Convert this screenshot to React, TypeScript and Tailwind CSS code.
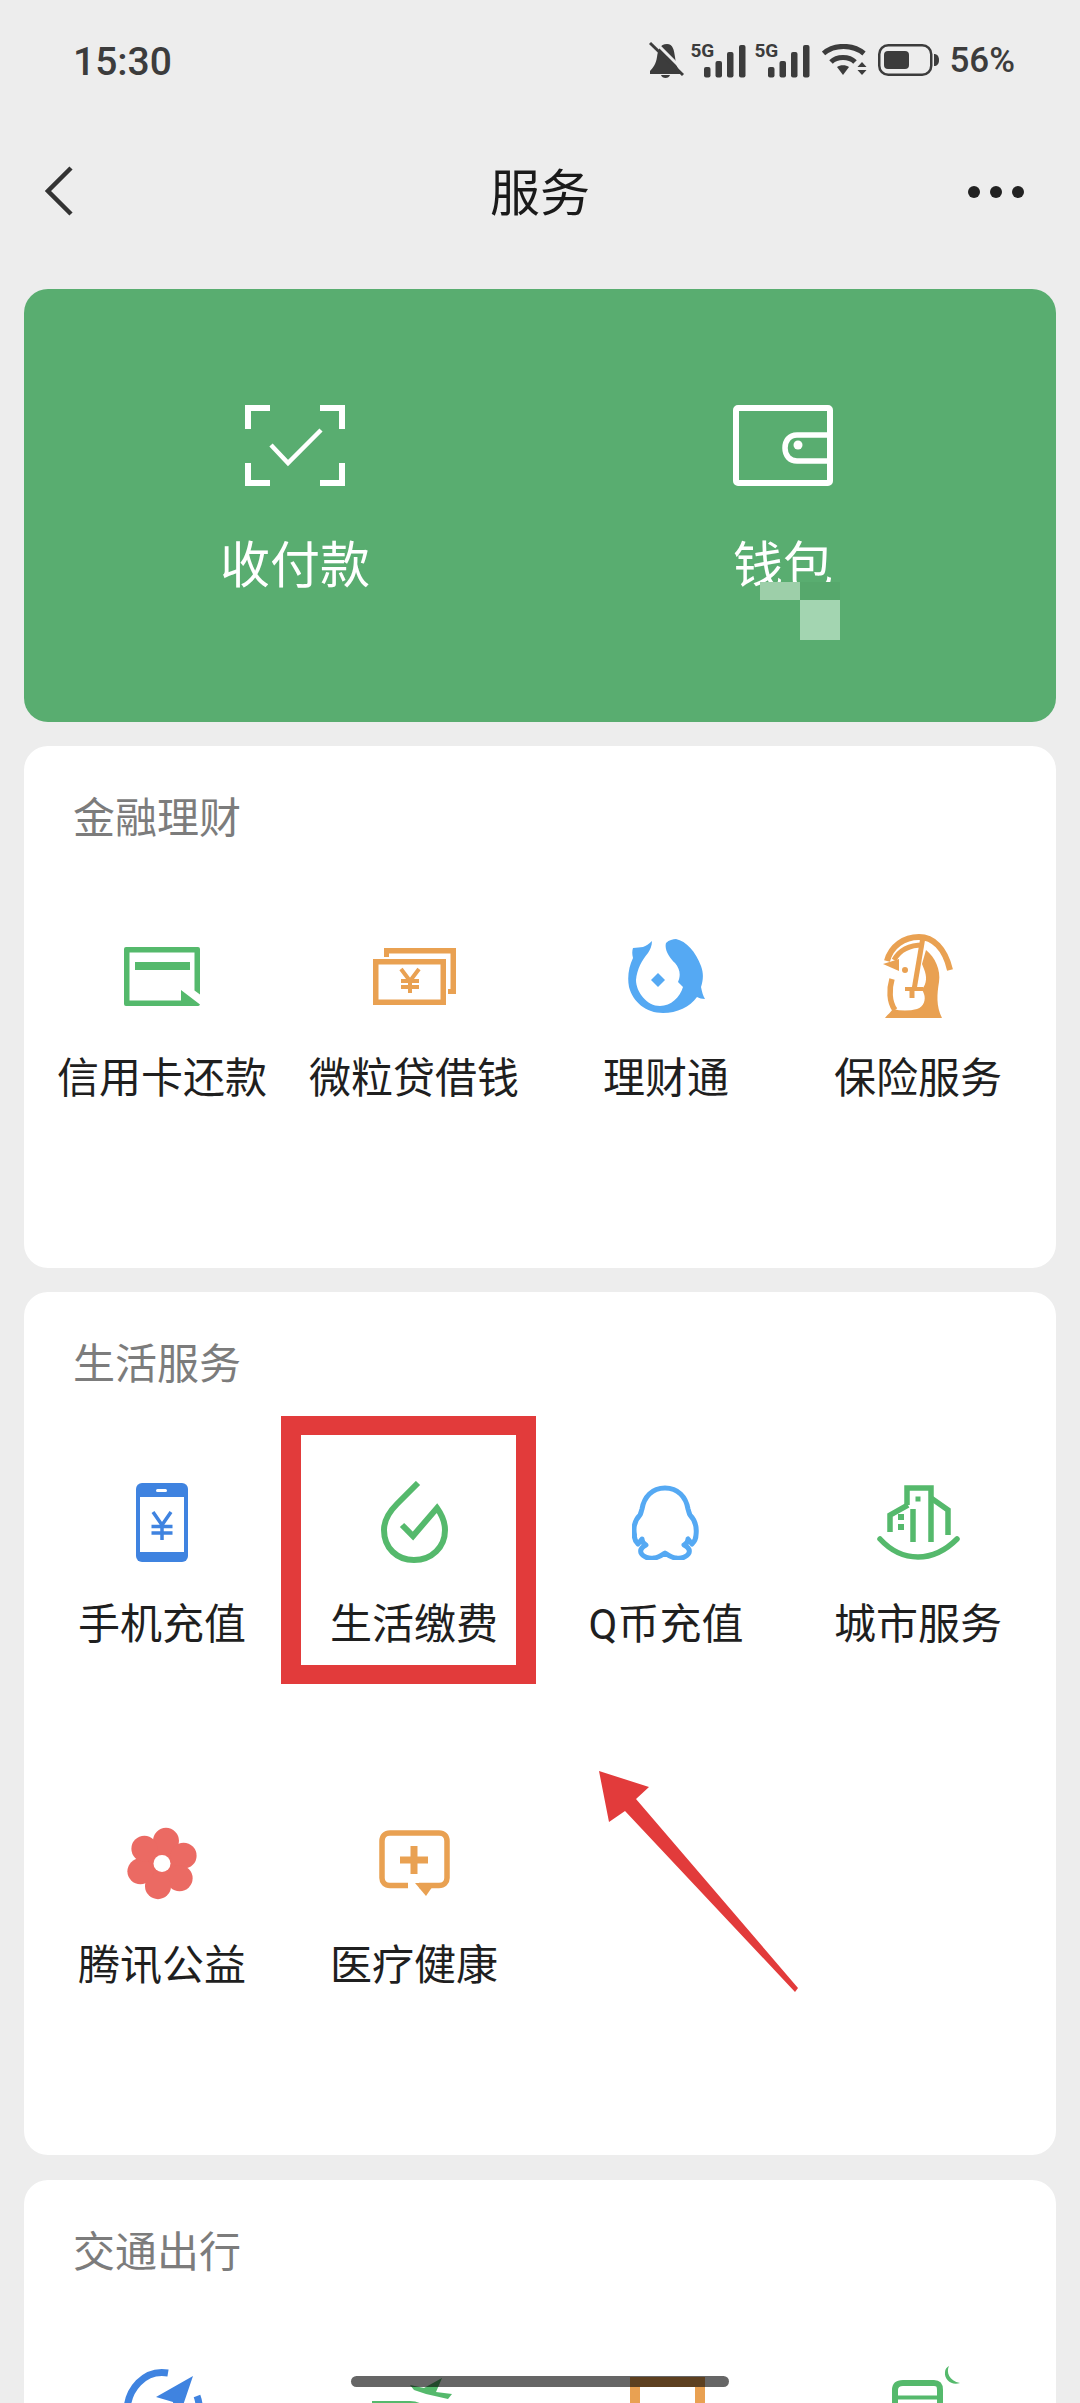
import type { ReactNode } from "react";

const GREEN = "#55b96c";
const ORANGE = "#e9a152";
const BLUE = "#3f83e0";
const SKY = "#55a9f3";

function BellOff() {
  return (
    <svg width="35" height="38" viewBox="0 0 35 38">
      <path d="M18 3C11 3 9 9 8 16C7 23 4 27 1 30V33H31V30C28 27 27 23 26 16C25 9 24 3 18 3Z" fill="#3c3c3c" />
      <path d="M12 34H21C20 38 13 38 12 34Z" fill="#3c3c3c" />
      <path d="M4 -1L38 33" stroke="#ededed" strokeWidth="3" />
      <path d="M1 2L34 34" stroke="#3c3c3c" strokeWidth="3" />
    </svg>
  );
}

function Signal() {
  return (
    <div className="relative h-[38px] w-14">
      <span className="absolute left-0 top-[1px] text-[19px] font-bold leading-[18px] text-[#3c3c3c]">5G</span>
      <svg width="56" height="38" viewBox="0 0 56 38" fill="#3c3c3c">
        <rect x="14" y="26" width="6.5" height="10.5" rx="2" />
        <rect x="25.5" y="20" width="6.5" height="16.5" rx="2" />
        <rect x="37" y="11" width="6.5" height="25.5" rx="2" />
        <rect x="49" y="4" width="6.5" height="32.5" rx="2" />
      </svg>
    </div>
  );
}

function Wifi() {
  return (
    <svg width="45" height="32" viewBox="0 0 45 32" fill="#3c3c3c">
      <path d="M1.5 9.5C12 0 31 0 42 9.5" fill="none" stroke="#3c3c3c" strokeWidth="5" />
      <path d="M9 18C15 12 27 12 33 18" fill="none" stroke="#3c3c3c" strokeWidth="5" />
      <path d="M15 23C18 20.5 24 20.5 27 23L21 31Z" />
      <path d="M40 18L44.5 23H35.5Z" />
      <path d="M35.5 26H44.5L40 31Z" />
    </svg>
  );
}

function Battery() {
  return (
    <svg width="62" height="32" viewBox="0 0 62 32">
      <rect x="1.25" y="1.25" width="52" height="29.5" rx="9" fill="none" stroke="#3c3c3c" strokeWidth="2.5" />
      <rect x="6" y="7" width="25" height="18" rx="4" fill="#3c3c3c" />
      <path d="M56 10C59 10 61 12 61 16C61 20 59 22 56 22Z" fill="#3c3c3c" />
    </svg>
  );
}

function ScanIcon() {
  return (
    <svg width="100" height="81" viewBox="0 0 100 81" fill="none" stroke="#fff" strokeWidth="6">
      <path d="M3 24V3H25" />
      <path d="M75 3H97V24" />
      <path d="M3 58V78H25" />
      <path d="M75 78H97V58" />
      <path d="M26 40L43 58L76 25" strokeWidth="4.5" />
    </svg>
  );
}

function WalletIcon() {
  return (
    <svg width="100" height="81" viewBox="0 0 100 81" fill="none" stroke="#fff" strokeWidth="6">
      <rect x="3" y="3" width="94" height="75" rx="2" />
      <path d="M97 30H64C56 30 52 36 52 43C52 51 57 56 64 56H97" strokeWidth="5.5" />
      <circle cx="65" cy="40" r="4.5" fill="#fff" stroke="none" />
    </svg>
  );
}

function CreditIcon() {
  return (
    <svg width="76" height="59" viewBox="0 0 76 59" fill={GREEN}>
      <path d="M2 0H74a2 2 0 0 1 2 2V47.5L70.5 43.5V5.5H5.5V53.5H57V43L76 57.5a2 2 0 0 1-2 1.5H2a2 2 0 0 1-2-2V2a2 2 0 0 1 2-2Z" />
      <rect x="11" y="15" width="55" height="8" />
    </svg>
  );
}

function LoanIcon() {
  return (
    <svg width="83" height="57" viewBox="0 0 83 57" fill="none" stroke={ORANGE}>
      <path d="M11 0H83V46H75V41H77.5V5.5H16V9H11Z" fill={ORANGE} stroke="none" />
      <rect x="2.75" y="13.75" width="67.5" height="40.5" strokeWidth="5.5" />
      <path d="M28 21L37 33L46 21M28 33H46M28 39H46M37 33V45" strokeWidth="4" />
    </svg>
  );
}

function LicaiIcon() {
  return (
    <svg width="77" height="74" viewBox="0 0 77 74" fill={SKY}>
      <path d="M38 4C41 1 45 0 48 0C58 2 68 13 73 27C76 35 75 42 73 48C74 53 75 57 77 60C74 60 71 59 69 58C62 68 49 74 35 74C18 74 5 63 1 48C-1 38 1 27 5 19C4 15 4 12 5 9C9 9 12 8 15 8C18 7 21 5 24 2C24 7 22 11 20 14C14 21 9 30 8 41C8 53 19 67 32 67C43 67 52 58 55 48L50 43C53 36 52 30 47 24C42 19 36 11 38 4Z" />
      <path d="M30 34L37 41L30 48L23 41Z" />
    </svg>
  );
}

function InsuranceIcon() {
  return (
    <svg width="70" height="84" viewBox="0 0 70 84" fill="none" stroke={ORANGE} strokeWidth="5">
      <path d="M4 27C8 12 21 3 36 3C50 3 62 14 67 36" strokeWidth="6" />
      <path d="M11 26C16 17 26 11 40 11" />
      <path d="M0 30L16 25V37Z" fill={ORANGE} stroke="none" />
      <circle cx="22" cy="36" r="3" fill={ORANGE} stroke="none" />
      <path d="M40 3L31 56" />
      <path d="M43 16C52 23 58 36 56 48C54 60 53 72 59 84H2C5 80 8 78 10 75C18 77 26 77 34 75C41 73 43 65 41 60L39 55C44 50 44 42 41 35L39 30Z" fill={ORANGE} stroke="none" />
      <path d="M9 45C6 55 6 68 12 76" strokeWidth="5.5" />
      <path d="M22 55H40" strokeWidth="4" />
      <path d="M29 56V64" />
    </svg>
  );
}

function PhoneIcon() {
  return (
    <svg width="52" height="79" viewBox="0 0 52 79">
      <rect width="52" height="79" rx="6" fill={BLUE} />
      <rect x="4" y="14" width="44" height="55" fill="#fff" />
      <rect x="20" y="6" width="11" height="3" rx="1.5" fill="#fff" />
      <path d="M17 29L26 42L35 29M15.5 43.5H36.5M15.5 50H36.5M26 42V57" fill="none" stroke={BLUE} strokeWidth="3.5" />
    </svg>
  );
}

function DropIcon() {
  return (
    <svg width="67" height="82" viewBox="0 0 67 82" fill="none" stroke={GREEN} strokeWidth="6">
      <path d="M37 2L16 23C7 32 3 41 3 49C3 67 16 79 33 79C51 79 64 66 64 49C64 42 61 34 56 27L32 55L21 44" />
    </svg>
  );
}

function PenguinIcon() {
  return (
    <svg width="69" height="75" viewBox="0 0 69 75" fill="none" stroke={SKY} strokeWidth="5" strokeLinejoin="round">
      <path d="M33 3C46 3 54 12 56 24C57 27 57 28 58 30C63 35 65 42 64 50C64 54 62 57 60 59L56 54C56 57 54 59 52 60C56 62 58 65 57 68C55 72 49 74 44 73C40 73 36 70 33 68C30 70 26 73 22 73C17 74 11 72 9 68C8 65 10 62 14 60C12 59 10 57 10 54L6 59C4 57 2 54 2.5 50C1 42 3 35 8 30C9 28 9 27 10 24C12 12 20 3 33 3Z" />
    </svg>
  );
}

function CityIcon() {
  return (
    <svg width="83" height="75" viewBox="0 0 83 75" fill="none" stroke={GREEN} strokeWidth="5.5">
      <path d="M3 54C14 66 27 72 41 72C55 72 68 66 80 54" strokeLinecap="round" />
      <path d="M13 47V30L31 20" />
      <path d="M30 20V3H54V57" />
      <path d="M36 24V57" />
      <path d="M54 13L71 25V50" />
      <rect x="38.5" y="11.5" width="5" height="5" fill={GREEN} stroke="none" />
      <rect x="21" y="29" width="6" height="6" fill={GREEN} stroke="none" />
      <rect x="21" y="39" width="6" height="6" fill={GREEN} stroke="none" />
    </svg>
  );
}

function FlowerIcon() {
  const petals = [-80, -20, 40, 100, 160, 220];
  return (
    <svg width="72" height="73" viewBox="0 0 72 73" fill="#eb6a63">
      <circle cx="36" cy="36.5" r="18" />
      {petals.map((deg) => (
        <circle
          key={deg}
          cx={36 + 23 * Math.cos((deg * Math.PI) / 180)}
          cy={36.5 + 23 * Math.sin((deg * Math.PI) / 180)}
          r="13"
        />
      ))}
      <circle cx="36" cy="36.5" r="8.5" fill="#fff" />
    </svg>
  );
}

function MedicalIcon() {
  return (
    <svg width="71" height="66" viewBox="0 0 71 66" fill="none" stroke={ORANGE} strokeWidth="5.5">
      <path d="M29 55.5H11C6 55.5 3 52 3 48V11C3 6 6 3 11 3H60C65 3 68 6 68 11V48C68 52 65 55.5 60 55.5H40" />
      <path d="M36 53H56L47 66Z" fill={ORANGE} stroke="none" />
      <path d="M21 30H49M35 16V44" strokeWidth="7" />
    </svg>
  );
}

function PlaneIcon() {
  return (
    <svg width="88" height="88" viewBox="0 0 88 88" fill="none" stroke={BLUE} strokeWidth="7">
      <path d="M50 7C26 3 9 24 9 46" />
      <path d="M75 10L38 31L55 36L58 60Z" fill={BLUE} stroke="none" />
      <path d="M79 30C82 38 82 46 80 55" />
    </svg>
  );
}

function TrainIcon() {
  return (
    <svg width="88" height="88" viewBox="0 0 88 88" fill="none" stroke={GREEN} strokeWidth="6">
      <path d="M40 19L54 22L72 12L66 26L82 28L78 33L56 28L44 24Z" fill={GREEN} stroke="none" />
      <path d="M5 80V38H40C50 38 56 44 56 52" />
    </svg>
  );
}

function HotelIcon() {
  return (
    <svg width="88" height="88" viewBox="0 0 88 88" fill="none" stroke={ORANGE} strokeWidth="10">
      <rect x="13" y="16" width="65" height="68" />
    </svg>
  );
}

function SeatIcon() {
  return (
    <svg width="88" height="88" viewBox="0 0 88 88" fill="none" stroke={GREEN} strokeWidth="6">
      <path d="M21 60V24C21 19 24 17 29 17H60C64 17 66 19 66 24V60" />
      <path d="M21 31.5H66" strokeWidth="4" />
      <path d="M75 0C72 6 75 15 86 17C78 20 70 14 71 6C71 3 73 1 75 0Z" fill={GREEN} stroke="none" />
    </svg>
  );
}

type Item = { label: string; icon: ReactNode };

const finance: Item[] = [
  { label: "信用卡还款", icon: <CreditIcon /> },
  { label: "微粒贷借钱", icon: <LoanIcon /> },
  { label: "理财通", icon: <LicaiIcon /> },
  { label: "保险服务", icon: <InsuranceIcon /> },
];

const life: Item[] = [
  { label: "手机充值", icon: <PhoneIcon /> },
  { label: "生活缴费", icon: <DropIcon /> },
  { label: "Q币充值", icon: <PenguinIcon /> },
  { label: "城市服务", icon: <CityIcon /> },
  { label: "腾讯公益", icon: <FlowerIcon /> },
  { label: "医疗健康", icon: <MedicalIcon /> },
];

function ServiceCell({ label, icon }: Item) {
  return (
    <div className="flex h-[341px] flex-col items-center pt-[89px]">
      <div className="flex h-[88px] items-center justify-center">{icon}</div>
      <p className="mt-[35px] whitespace-nowrap text-[42px] leading-[48px] text-[#1f1f1f]">{label}</p>
    </div>
  );
}

function Section({ title, items }: { title: string; items: Item[] }) {
  return (
    <section className="rounded-3xl bg-white pb-[84px]">
      <h2 className="pl-[49px] pt-[49px] text-[42px] font-normal leading-[48px] text-[#7c7c7c]">{title}</h2>
      <div className="grid grid-cols-4 px-3">
        {items.map((item) => (
          <ServiceCell key={item.label} {...item} />
        ))}
      </div>
    </section>
  );
}

export default function App() {
  return (
    <div className="relative h-[2403px] w-[1080px] overflow-hidden bg-[#ededed] font-['Roboto','Noto_Sans_CJK_SC',sans-serif]">
      {/* status bar */}
      <div className="mt-[41px] flex h-[38px] items-center justify-between pl-[73px] pr-[65px] text-[#3c3c3c]">
        <span className="pt-[5px] text-[39px] font-medium leading-none">15:30</span>
        <div className="flex items-center">
          <BellOff />
          <div className="ml-[6px]"><Signal /></div>
          <div className="ml-2"><Signal /></div>
          <div className="ml-3"><Wifi /></div>
          <div className="ml-[11px]"><Battery /></div>
          <span className="ml-[9px] text-[35px] font-medium leading-none">56%</span>
        </div>
      </div>

      {/* nav */}
      <div className="mt-16 grid h-24 grid-cols-3 items-center px-[56px]">
        <svg className="-ml-[11px]" width="28" height="50" viewBox="0 0 28 50" fill="none" stroke="#333" strokeWidth="4.5">
          <path d="M26 2L3 25L26 48" />
        </svg>
        <h1 className="pt-[6px] text-center text-[50px] font-normal leading-none text-[#1a1a1a]">服务</h1>
        <div className="flex items-center justify-end gap-[10px] pt-[2px]">
          <span className="size-3 rounded-full bg-[#222]" />
          <span className="size-3 rounded-full bg-[#222]" />
          <span className="size-3 rounded-full bg-[#222]" />
        </div>
      </div>

      <div className="mt-[50px] flex flex-col gap-6 px-6">
        {/* pay + wallet */}
        <div className="grid h-[433px] grid-cols-2 rounded-3xl bg-[#59ad70] pl-[27px] pr-[29px] text-white">
          <div className="flex flex-col items-center pt-[116px]">
            <ScanIcon />
            <p className="mt-[50px] text-[50px] leading-[60px]">收付款</p>
          </div>
          <div className="flex flex-col items-center pt-[116px]">
            <WalletIcon />
            <p className="mt-[50px] text-[50px] leading-[60px]">钱包</p>
          </div>
        </div>

        <Section title="金融理财" items={finance} />
        <Section title="生活服务" items={life} />

        <section className="mt-px rounded-3xl bg-white">
          <h2 className="pl-[49px] pt-[49px] text-[42px] font-normal leading-[48px] text-[#7c7c7c]">交通出行</h2>
          <div className="grid grid-cols-4 px-3 pt-[89px]">
            <div className="flex justify-center"><PlaneIcon /></div>
            <div className="flex justify-center"><TrainIcon /></div>
            <div className="flex justify-center"><HotelIcon /></div>
            <div className="flex justify-center"><SeatIcon /></div>
          </div>
        </section>
      </div>

      {/* mosaic over the wallet label */}
      <div className="absolute left-[760px] top-[582px] h-[18px] w-10 bg-[#9dcfa9]" />
      <div className="absolute left-[800px] top-[582px] h-[18px] w-10 bg-[#56a86c]" />
      <div className="absolute left-[800px] top-[600px] h-10 w-10 bg-[#a3d5b1]" />

      {/* red annotation */}
      <div className="absolute left-[281px] top-[1416px] h-[268px] w-[255px] border-x-[20px] border-y-[19px] border-[#e23b3b]" />
      <svg className="absolute left-[590px] top-[1760px]" width="220" height="240" viewBox="0 0 220 240" fill="#e23b3b">
        <path d="M9 11L59 27L46 39L208 228L205 232L35 51L19 62Z" />
      </svg>

      {/* home indicator */}
      <div className="absolute left-[351px] top-[2376px] h-[11px] w-[378px] rounded-full bg-black/60" />
    </div>
  );
}
